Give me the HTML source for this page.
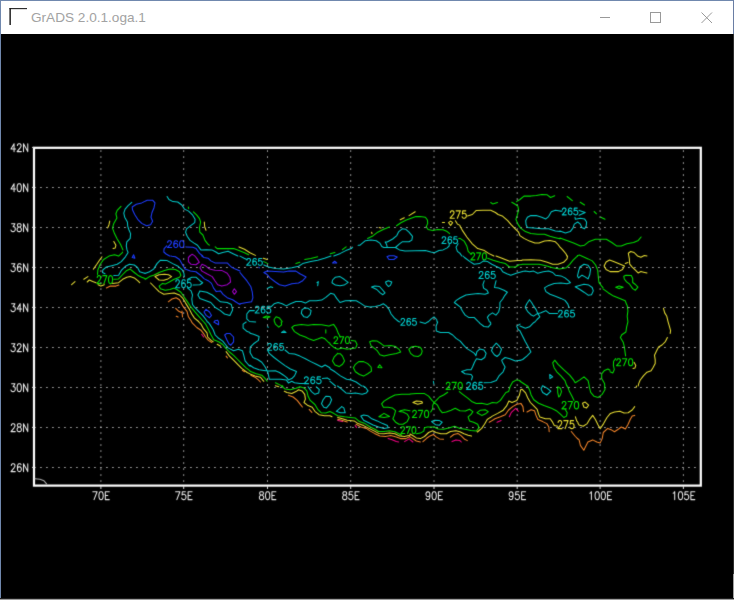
<!DOCTYPE html>
<html><head><meta charset="utf-8"><title>GrADS 2.0.1.oga.1</title>
<style>
html,body{margin:0;padding:0;background:#000;}
body{width:734px;height:600px;overflow:hidden;position:relative;font-family:"Liberation Sans",sans-serif;}
#win{position:absolute;left:0;top:0;width:734px;height:600px;background:#000;}
#tb{position:absolute;left:1px;top:1px;width:732px;height:33px;background:#fff;}
#topline{position:absolute;left:0;top:0;width:734px;height:1px;background:#7088ae;}
#lb{position:absolute;left:0;top:0;width:1px;height:600px;background:#7088ae;}
#rb{position:absolute;left:733px;top:34px;width:1px;height:540px;background:#2d2d2d;}
#rb2{position:absolute;left:733px;top:574px;width:1px;height:26px;background:#a0a0a0;}
#rb3{position:absolute;left:733px;top:0;width:1px;height:34px;background:#6a7ea4;}
#bb{position:absolute;left:0;top:598px;width:734px;height:2px;background:linear-gradient(#000 0,#3a3a3a 50%,#9c9c9c 50%,#9c9c9c 100%);}
#title{position:absolute;left:31px;top:9px;font-size:13.6px;line-height:18px;color:#a2a2a2;letter-spacing:0px;white-space:nowrap;}
svg{position:absolute;left:0;top:0;}
.gr{stroke:#d2d2d2;stroke-width:1;stroke-dasharray:1.3 4.7;fill:none;}
.ct{fill:none;stroke-width:1.05;stroke-linejoin:round;stroke-linecap:round;}
.cl{fill:none;stroke-width:1.1;stroke-linejoin:round;stroke-linecap:round;}
.ax{fill:none;stroke:#e8e8e8;stroke-width:1.05;stroke-linejoin:round;stroke-linecap:round;}
</style></head><body>
<div id="win">
<div id="tb"></div><div id="topline"></div><div id="lb"></div><div id="rb"></div><div id="rb2"></div><div id="rb3"></div><div id="bb"></div>
<div id="title">GrADS 2.0.1.oga.1</div>
<svg width="734" height="600" viewBox="0 0 734 600">
<!-- window chrome icons -->
<rect x="9.4" y="8.1" width="1.5" height="16.9" fill="#222"/><rect x="9.4" y="8.1" width="17.6" height="1.05" fill="#181818"/>
<path d="M600 17.5 H610" stroke="#999" stroke-width="1"/>
<rect x="650.5" y="12.5" width="10" height="10" fill="none" stroke="#999" stroke-width="1"/>
<path d="M701.5 12.5 L712 23 M712 12.5 L701.5 23" stroke="#999" stroke-width="1" fill="none"/>
<defs><filter id="bl" x="-2%" y="-2%" width="104%" height="104%"><feConvolveMatrix order="3" kernelMatrix="0.017 0.085 0.017 0.085 0.592 0.085 0.017 0.085 0.017" divisor="1" edgeMode="none" preserveAlpha="false"/></filter></defs>
<g filter="url(#bl)">
<line x1="100.90" y1="150.4" x2="100.90" y2="484" class="gr"/>
<line x1="183.70" y1="150.4" x2="183.70" y2="484" class="gr"/>
<line x1="267.50" y1="150.4" x2="267.50" y2="484" class="gr"/>
<line x1="350.70" y1="150.4" x2="350.70" y2="484" class="gr"/>
<line x1="434.00" y1="150.4" x2="434.00" y2="484" class="gr"/>
<line x1="517.20" y1="150.4" x2="517.20" y2="484" class="gr"/>
<line x1="600.10" y1="150.4" x2="600.10" y2="484" class="gr"/>
<line x1="683.40" y1="150.4" x2="683.40" y2="484" class="gr"/>
<line x1="34.3" y1="187.50" x2="700" y2="187.50" class="gr"/>
<line x1="34.3" y1="227.50" x2="700" y2="227.50" class="gr"/>
<line x1="34.3" y1="267.50" x2="700" y2="267.50" class="gr"/>
<line x1="34.3" y1="307.50" x2="700" y2="307.50" class="gr"/>
<line x1="34.3" y1="347.50" x2="700" y2="347.50" class="gr"/>
<line x1="34.3" y1="387.50" x2="700" y2="387.50" class="gr"/>
<line x1="34.3" y1="427.50" x2="700" y2="427.50" class="gr"/>
<line x1="34.3" y1="467.50" x2="700" y2="467.50" class="gr"/>
<path d="M132.2 207.0 136.3 204.3 141.7 202.9 147.2 200.2 152.6 200.2 155.0 202.9 154.0 207.7 152.0 212.5 151.0 217.2 152.6 221.3 150.6 224.7 146.5 225.7 141.7 223.4 137.7 219.3 134.7 214.5 132.5 209.8 132.2 207.0 M133.6 254.8 132.2 257.5 134.9 258.2 133.6 254.8 M185.9 246.9 192.7 247.2 196.1 248.6 199.5 253.4 202.7 256.0 M166.8 245.9 164.1 248.6 163.8 252.0 166.1 254.0 169.6 256.0 M389.0 256.0 389.3 255.8 394.1 255.8 394.5 256.0 M170.7 256.0 172.0 256.3 175.4 256.8 179.5 259.5 182.2 264.3 185.0 269.1 190.4 271.1 195.9 271.8 200.6 275.2 204.0 278.6 208.1 280.7 211.5 283.4 213.6 288.1 216.3 291.6 220.4 290.9 223.1 294.3 227.2 297.7 232.6 299.7 236.7 302.5 240.0 304.5 M201.8 256.0 204.0 257.5 208.1 258.2 210.8 260.9 214.9 262.9 221.7 262.9 227.2 262.9 231.3 267.0 235.4 269.1 240.0 271.1 M206.1 309.3 204.0 312.0 206.1 315.4 209.5 317.7 211.5 315.4 209.5 312.0 206.1 309.3 M214.9 320.8 214.4 322.0 M218.6 322.0 217.7 320.2 214.9 320.8 M332.6 262.9 334.7 261.2 336.7 262.9 332.6 262.9 M258.8 267.2 259.5 267.8 M263.8 272.5 267.2 271.1 275.4 271.5 283.6 272.1 289.0 271.1 295.9 271.1 299.9 273.8 306.1 277.0 302.7 280.7 298.6 283.0 291.8 283.8 285.0 286.1 279.5 284.7 275.4 282.0 270.0 277.9 267.2 274.5 263.8 272.5 M240.0 272.5 242.7 275.9 246.8 280.7 250.9 286.8 252.3 292.2 252.9 297.7 251.6 301.8 246.8 302.5 240.0 303.8 M387.0 256.8 388.5 256.0 M394.5 256.0 397.2 257.1 393.8 259.5 389.0 259.5 387.0 256.8 M213.8 322.0 214.0 322.0 M218.6 322.0 218.6 324.8 213.8 322.0 M224.7 335.0 226.8 333.4 230.2 333.6 233.6 337.0 233.6 341.8 230.8 345.2 228.8 343.8 226.8 339.8 224.7 335.0" stroke="#1e3cff" class="ct"/>
<path d="M131.8 202.3 128.1 205.7 125.1 209.1 123.8 213.2 124.7 217.2 127.4 222.0 127.7 226.1 128.8 229.5 130.6 233.6 130.2 238.4 126.8 241.8 126.3 245.9 127.0 249.9 127.9 252.0 M128.1 252.5 125.4 256.8 121.3 261.6 117.2 264.3 111.8 265.7 106.3 267.0 102.9 269.8 102.5 272.5 105.0 273.8 M113.8 275.6 118.6 275.2 121.3 270.4 125.4 266.3 129.5 264.3 134.3 265.0 137.7 267.7 139.7 271.8 144.5 273.2 145.0 273.0 M167.1 196.5 168.9 199.5 172.9 201.6 177.7 202.0 181.8 205.0 184.5 209.1 188.6 211.1 192.7 215.2 195.1 219.3 194.7 222.7 190.7 225.7 186.6 228.8 185.6 232.2 187.2 236.3 190.0 240.4 194.1 243.1 197.5 245.2 200.9 249.9 206.3 249.7 211.8 249.9 215.9 252.0 218.6 253.8 222.7 252.4 228.1 251.3 233.6 254.0 237.9 256.0 M333.8 256.0 340.4 253.4 345.8 250.6 351.3 248.6 352.6 247.2 M358.1 245.2 360.0 245.2 M360.0 245.2 365.4 240.7 370.9 240.1 376.3 240.7 379.8 243.1 381.8 246.5 383.8 247.5 395.4 247.5 399.5 249.9 405.0 250.9 425.4 250.6 430.8 252.0 434.3 252.7 439.0 250.6 443.1 249.9 447.2 247.9 449.2 245.9 449.2 243.8 M387.2 247.2 386.6 244.5 385.2 242.0 387.2 242.0 392.7 239.0 396.8 235.6 398.8 231.6 402.2 228.8 405.6 229.2 409.0 232.2 412.5 236.3 411.8 240.1 409.0 241.8 402.2 241.8 399.5 243.8 395.4 247.5 M458.1 243.8 456.0 247.2 457.4 251.3 460.0 253.4 M560.0 211.1 555.4 210.2 551.3 211.8 548.6 216.6 545.8 218.9 541.7 217.2 536.3 215.6 530.8 215.6 527.4 217.2 525.7 220.7 526.1 224.7 527.4 227.5 533.6 227.9 541.7 228.8 548.6 228.8 555.4 230.9 560.0 231.6 M460.0 253.4 461.8 256.0 M560.0 211.1 562.0 211.1 M579.1 210.4 585.2 212.5 579.1 215.2 M575.0 217.2 575.3 219.3 580.4 218.3 584.5 218.9 586.6 222.0 586.2 226.1 584.5 228.8 581.8 227.5 580.4 224.1 577.7 222.0 574.3 224.1 572.9 228.1 570.2 231.6 565.4 232.9 560.0 230.9 M145.0 273.5 149.5 271.8 153.6 269.1 157.0 263.6 160.4 260.2 167.2 260.6 172.7 263.6 178.1 266.3 182.2 269.8 183.9 273.2 184.3 276.6 M187.7 279.3 191.8 277.2 195.9 277.2 199.9 280.7 202.7 282.7 199.9 284.7 193.1 285.1 M187.7 288.1 191.1 290.9 192.5 295.0 191.8 299.0 192.5 304.5 194.5 307.2 198.6 311.3 202.7 315.4 206.8 320.8 207.3 322.0 M199.9 290.9 197.9 295.0 199.9 298.4 205.4 300.4 210.8 302.5 214.9 307.2 220.4 310.6 224.5 314.0 229.9 315.4 232.6 309.9 231.3 304.5 227.2 302.5 220.4 301.8 216.3 298.4 212.2 295.0 206.8 292.2 199.9 290.9 M263.8 265.0 268.6 267.0 275.4 268.4 283.6 269.1 291.8 267.7 298.6 266.3 302.7 263.6 310.8 261.6 317.7 260.2 324.5 258.2 331.0 256.0 M240.0 256.1 244.1 258.2 246.8 259.5 M267.2 288.4 270.7 286.8 272.7 287.5 M317.0 282.7 318.3 281.6 317.7 285.7 M340.0 276.6 335.4 277.2 332.6 280.0 332.0 282.7 335.4 285.1 340.0 285.7 M270.7 307.2 274.1 303.8 278.1 302.5 282.2 303.8 286.3 305.9 290.4 303.8 295.9 301.5 301.3 301.5 305.4 303.1 309.5 300.7 316.3 300.7 321.7 300.1 325.8 297.4 330.6 293.3 334.0 294.3 336.7 298.4 340.0 302.5 M254.3 310.6 249.5 310.6 246.8 314.0 246.8 318.8 249.5 321.5 255.7 322.0 M302.0 309.9 304.7 307.9 308.1 308.3 311.1 310.6 310.2 314.7 307.4 317.4 304.0 316.8 301.3 313.4 302.0 309.9 M340.0 276.6 344.1 279.3 348.2 282.4 344.1 285.1 340.0 285.7 M385.6 282.0 388.4 280.7 391.8 282.0 390.4 285.4 388.4 286.5 386.3 284.1 385.6 282.0 M371.6 287.1 374.7 286.1 379.5 286.5 382.2 289.5 385.0 292.9 382.9 294.7 380.2 292.9 376.8 289.5 371.6 287.1 M340.0 302.5 345.4 300.7 350.9 300.4 356.3 300.7 360.4 303.1 364.5 305.9 370.0 306.9 375.4 306.5 380.2 305.2 383.3 303.8 386.3 305.9 389.0 309.3 391.1 314.0 394.5 318.1 398.6 321.5 400.0 322.0 M427.8 322.0 428.6 321.5 431.3 318.8 434.0 316.8 436.7 319.5 437.1 322.0 M463.0 256.0 464.5 257.5 470.0 261.6 474.1 264.3 479.5 263.6 483.6 260.9 487.7 261.6 491.8 264.3 495.9 266.3 500.6 268.4 502.7 271.8 506.8 273.8 510.8 275.2 516.3 273.2 521.7 271.8 522.0 271.8 M484.3 280.7 482.9 284.7 483.6 288.1 487.0 290.2 488.4 292.9 485.0 294.3 478.1 293.6 471.3 294.3 465.9 295.0 460.4 297.7 456.3 300.4 454.3 302.5 457.0 304.5 460.4 307.2 462.5 311.3 465.2 315.1 468.6 317.4 474.1 317.4 476.8 320.2 478.6 322.0 M489.4 322.0 489.0 320.8 487.4 317.4 489.0 315.1 492.5 312.9 495.9 315.1 498.6 312.0 499.9 307.2 499.9 302.5 502.7 299.0 504.7 295.6 507.4 292.2 504.0 290.2 498.6 288.1 494.5 287.5 495.2 284.1 496.1 280.7 M522.0 271.5 525.4 271.1 529.5 271.8 533.6 271.1 537.7 273.2 543.2 271.8 548.6 271.1 552.7 272.5 555.4 275.2 560.9 275.9 565.0 277.9 568.4 280.7 570.4 282.7 567.0 283.8 560.9 283.0 554.1 283.4 548.6 285.4 544.5 287.9 545.9 291.6 550.0 294.3 555.4 296.3 560.9 298.4 565.0 300.4 567.7 303.8 569.0 307.2 M557.5 313.4 549.3 313.4 545.9 310.6 544.5 311.3 540.4 312.9 537.7 313.4 M529.5 299.7 526.8 303.8 525.2 307.2 527.5 311.3 530.9 314.7 533.6 316.1 537.7 313.4 536.3 309.9 533.6 305.9 531.6 302.5 529.5 299.7 M537.7 313.4 539.8 316.8 537.0 319.5 534.9 322.0 M579.9 267.0 584.0 264.3 588.1 265.3 590.6 269.1 589.8 274.5 588.1 278.9 584.7 276.6 582.0 275.2 578.6 277.9 577.5 275.9 578.6 271.1 579.9 267.0 M575.2 286.8 578.6 285.7 584.0 284.3 588.8 285.1 592.2 287.5 593.3 290.9 591.5 294.7 588.1 295.2 584.0 292.2 579.9 289.5 575.2 286.8 M208.0 322.0 209.7 324.1 213.1 329.5 215.2 335.0 217.9 337.7 222.7 341.1 225.4 344.5 228.1 347.9 233.6 350.7 238.3 349.3 242.4 350.7 243.8 355.4 245.1 360.9 248.6 365.0 250.0 366.2 M246.2 322.0 243.1 324.1 243.1 328.2 247.2 331.6 250.0 332.4 M250.0 351.4 249.9 352.0 250.0 352.2 M250.0 333.2 253.6 334.3 259.1 336.6 258.4 340.4 253.6 343.8 250.2 347.2 250.2 352.7 252.9 357.5 257.7 359.5 261.8 362.2 265.2 367.0 267.9 372.5 268.9 377.2 269.3 379.3 275.4 379.3 280.9 379.3 286.3 379.9 288.4 382.9 291.8 381.3 294.5 382.7 299.9 383.4 304.0 383.4 M250.0 365.3 253.6 367.7 259.1 369.7 263.8 370.4 268.6 371.1 275.4 370.7 279.5 372.5 283.6 375.2 287.0 377.9 288.4 379.9 M285.0 350.0 289.0 353.4 294.5 354.1 299.9 356.1 305.4 358.8 310.8 361.6 316.3 364.3 321.7 367.0 325.1 365.0 329.9 367.7 330.0 367.7 M267.9 350.7 269.3 353.4 274.1 357.5 279.5 361.6 285.0 365.6 290.4 369.0 296.5 371.5 294.5 375.9 291.8 378.6 288.4 379.9 M322.4 378.6 327.2 377.9 330.0 379.8 M281.6 332.5 283.9 330.9 286.0 332.5 281.6 332.5 M267.7 326.5 268.2 327.4 M330.0 368.7 335.0 371.8 340.4 375.9 346.6 379.3 351.3 379.9 356.1 382.0 360.9 385.4 361.9 386.0 M335.5 386.0 331.6 382.7 330.0 381.4 M420.0 322.0 425.4 323.4 427.6 322.0 M437.7 322.0 437.7 322.0 436.1 326.1 436.3 330.9 440.4 332.5 448.6 332.5 452.7 335.0 456.1 338.4 460.2 341.1 463.6 345.2 467.0 348.6 471.1 351.1 474.5 353.4 475.9 355.7 476.9 351.6 479.9 348.9 484.0 350.0 486.1 353.4 484.7 357.5 481.3 359.8 476.5 358.8 474.5 362.2 472.5 367.0 471.1 369.7 467.0 369.7 461.6 371.5 465.0 373.8 471.1 374.5 472.5 376.5 471.5 379.9 M484.0 382.7 490.8 382.4 496.3 380.6 499.0 375.9 503.1 371.8 505.1 367.0 502.4 362.2 501.7 360.2 505.1 357.5 509.9 358.8 515.4 360.9 520.0 360.2 M478.8 322.0 479.9 323.4 484.0 326.5 488.1 327.1 490.8 324.1 490.5 322.0 M496.3 343.2 492.9 347.0 491.5 350.7 494.3 354.7 497.0 356.5 499.7 354.1 501.5 349.3 499.0 345.9 496.3 343.2 M520.0 324.1 516.7 326.1 518.1 329.5 520.0 330.9 M433.4 381.3 433.9 384.0 M534.7 322.0 533.6 322.7 529.5 326.8 525.4 328.2 520.0 326.1 M520.0 330.9 522.0 335.0 525.4 341.8 528.9 347.9 530.9 352.0 526.8 356.1 522.7 359.5 520.0 360.6 M549.7 374.5 552.7 376.9 550.0 378.6 549.7 374.5 M542.5 385.7 542.3 386.0 M543.1 386.0 542.5 385.7 M325.8 396.3 323.1 399.8 321.5 403.8 323.8 407.2 326.5 407.9 329.9 403.8 331.6 399.8 329.9 396.6 325.8 396.3 M308.1 386.8 311.5 391.6 314.9 394.3 318.7 392.9 319.3 389.5 316.3 386.8 M337.5 386.0 340.4 388.2 345.9 392.9 351.3 393.6 355.4 392.9 362.2 394.3 366.3 392.9 368.0 390.9 365.6 387.5 363.0 386.0 M341.8 406.6 336.3 411.3 340.4 412.7 345.2 412.7 343.8 407.9 341.8 406.6 M360.9 416.1 363.6 415.1 367.7 415.7 371.8 418.8 377.2 420.9 382.7 423.6 387.4 425.6 388.1 427.7 384.0 428.4 378.6 427.0 373.1 425.0 367.7 422.2 363.6 420.2 360.9 416.1 M431.6 421.6 434.7 420.2 439.5 420.6 442.2 422.2 439.5 425.2 435.4 424.7 431.6 421.6 M542.5 386.0 541.0 388.9 542.7 392.5 546.8 395.0 550.8 391.2 547.4 388.4 543.2 386.0" stroke="#00c8c8" class="ct"/>
<path d="M121.0 206.3 117.2 210.4 115.9 213.8 116.9 217.9 113.8 223.4 112.5 228.1 114.5 233.6 117.2 239.0 120.6 244.5 122.9 249.9 M122.5 252.0 122.4 252.7 118.6 256.1 114.5 254.8 109.0 256.1 103.6 259.5 100.2 264.3 97.9 269.8 97.5 274.5 M113.8 279.3 118.6 278.9 122.7 274.5 126.8 270.4 130.2 269.1 134.3 272.5 137.7 275.2 141.7 277.2 145.0 278.6 M188.3 207.0 188.6 208.4 M193.4 211.8 196.8 215.2 199.5 218.6 200.6 222.0 199.5 227.5 199.8 232.2 202.9 235.0 205.0 240.4 207.7 243.8 209.3 245.2 M215.2 246.9 217.2 248.6 225.4 248.6 233.6 248.6 239.0 250.6 244.5 252.7 248.6 254.7 M330.2 253.8 334.9 252.4 M342.4 249.7 346.1 246.9 M458.8 238.4 460.0 238.4 M367.5 238.4 372.3 236.3 377.7 232.2 383.2 229.5 389.3 227.1 M396.5 225.7 400.9 222.7 406.3 220.0 411.8 217.9 415.9 216.6 419.9 216.6 425.4 217.2 427.4 220.0 427.7 223.4 426.3 226.8 428.1 229.5 432.9 230.6 437.7 229.5 443.1 229.8 447.2 231.6 449.6 233.6 M516.5 201.6 519.9 199.5 524.0 196.1 530.8 196.1 536.3 195.4 541.7 194.4 547.2 194.8 550.6 197.5 554.7 195.7 M490.7 202.5 492.7 203.9 497.5 202.5 M511.8 202.3 515.2 204.3 517.2 205.7 M517.9 206.3 518.6 210.4 517.2 215.2 515.9 219.3 517.9 224.1 520.6 228.1 525.4 231.6 530.8 233.6 537.7 234.3 544.5 234.3 549.9 236.3 555.4 237.7 560.0 238.8 M460.0 238.4 464.1 241.1 466.8 245.9 468.2 251.3 470.9 254.0 M567.1 196.5 572.3 200.6 M580.2 202.3 584.5 205.0 M594.1 211.5 596.5 213.8 M600.9 217.2 605.0 219.3 M560.0 238.0 566.8 240.4 573.6 243.1 580.4 245.9 584.5 245.2 588.6 241.8 595.4 239.3 600.9 239.3 606.3 239.3 611.8 242.5 616.5 245.9 621.3 245.9 626.8 243.8 633.6 242.5 638.3 240.4 641.1 237.0 M577.2 256.0 577.7 255.4 579.8 255.1 581.6 256.0 M623.8 276.3 625.9 275.2 631.3 275.6 632.7 278.4 632.7 282.5 635.4 284.5 637.9 287.2 635.4 290.2 632.7 288.6 629.3 283.8 626.6 281.8 624.3 279.0 623.8 276.3 M615.7 287.2 619.1 286.1 623.2 287.2 619.1 288.6 615.7 287.2 M603.0 288.8 608.2 292.7 613.6 296.1 620.4 298.8 625.2 300.8 626.8 305.0 M145.0 279.1 145.4 279.3 149.5 276.6 153.6 275.2 159.1 272.5 164.5 270.4 170.0 269.1 175.4 269.5 179.5 271.8 180.9 275.2 179.5 277.2 174.1 279.3 169.3 282.0 165.2 284.1 162.5 283.4 159.1 286.1 160.4 288.8 165.2 290.2 170.0 289.5 174.1 288.1 176.8 289.5 180.9 292.2 183.6 296.3 187.0 301.1 191.1 307.2 194.5 311.3 198.6 316.1 203.8 322.0 M263.8 261.6 267.9 263.6 M295.9 263.6 299.9 262.3 M304.7 259.5 310.8 258.4 317.7 256.8 M263.2 317.4 266.6 316.1 270.0 316.8 267.2 318.1 263.2 317.4 M276.1 316.8 274.1 319.5 274.4 322.0 M282.1 322.0 282.2 321.5 279.5 318.1 276.1 316.8 M487.7 258.2 493.1 260.2 499.9 262.3 505.4 263.6 509.5 267.0 515.6 267.0 519.0 264.7 522.0 264.6 M522.0 264.3 530.9 264.3 539.1 264.3 545.9 265.7 552.7 267.7 559.5 269.1 566.3 267.7 569.7 264.3 573.1 260.2 576.5 256.8 577.6 256.0 M581.6 256.0 582.7 256.5 588.1 258.9 592.2 260.9 595.6 265.0 597.7 270.4 598.3 277.2 599.0 282.7 601.7 286.1 603.0 287.6 M203.9 322.0 205.6 324.1 208.4 329.5 211.1 335.0 213.8 339.8 218.6 341.8 222.7 344.5 225.4 347.9 229.5 352.0 233.6 355.4 237.7 359.5 241.7 363.6 245.8 367.7 250.0 370.8 M274.7 322.0 275.4 324.1 278.8 327.1 281.6 324.8 281.2 322.0 M330.0 325.7 328.6 326.1 321.7 324.8 313.6 324.4 308.1 325.2 301.3 324.4 294.5 325.4 291.8 327.5 294.5 331.6 299.9 335.0 305.4 337.0 309.5 339.1 313.6 340.4 317.7 339.1 321.7 337.4 324.5 338.4 328.6 342.5 330.0 343.2 M325.8 329.8 325.8 332.9 M250.0 371.3 256.3 373.8 261.8 375.2 265.2 378.6 267.2 381.3 M275.4 382.7 280.9 385.4 282.9 386.0 M330.0 325.5 333.6 324.4 336.3 328.2 338.4 333.6 340.4 337.0 M351.3 340.4 355.4 341.1 357.1 344.5 355.7 347.9 351.3 348.6 347.2 349.3 341.8 347.9 337.7 349.3 333.6 347.2 330.0 344.2 M337.7 353.4 334.3 356.8 332.5 360.9 335.0 365.0 339.1 366.6 342.5 364.3 344.5 360.9 342.5 356.1 340.4 353.8 337.7 353.4 M358.8 361.6 355.4 364.3 353.4 367.7 355.4 371.8 359.5 374.5 363.6 376.1 367.7 373.8 371.5 371.1 371.1 367.0 367.7 363.6 363.6 361.6 358.8 361.6 M369.7 341.8 372.5 340.7 377.2 341.1 381.3 343.8 384.0 345.9 390.8 345.6 395.6 346.6 399.0 349.3 400.7 352.0 396.3 353.4 389.5 354.7 384.0 356.1 379.9 354.7 377.2 350.7 373.8 347.9 371.1 345.9 369.7 341.8 M377.9 367.4 379.7 364.7 382.0 367.7 377.9 367.4 M420.0 347.2 415.4 346.2 411.3 347.0 408.8 349.3 410.6 353.4 414.0 356.1 418.1 356.5 420.0 355.4 M420.0 347.2 421.4 348.9 422.2 351.1 421.4 353.8 420.0 355.4 M510.4 386.0 512.6 382.0 516.7 379.9 520.0 380.6 M566.8 386.0 565.0 380.6 560.9 375.9 556.8 371.8 554.1 367.7 552.7 362.9 554.7 360.2 558.1 364.3 563.6 369.7 569.7 375.2 573.1 379.3 575.2 382.7 579.9 379.9 584.0 376.9 588.1 380.6 589.3 386.0 M604.8 386.0 604.5 383.4 601.7 378.6 601.7 373.8 604.5 370.4 607.9 369.0 610.0 370.3 M520.0 381.3 525.4 384.7 527.0 386.0 M627.0 305.0 627.2 305.4 627.9 310.9 627.2 316.3 627.9 321.8 626.6 327.2 625.9 332.0 621.8 334.7 620.4 337.5 623.2 342.2 624.5 347.7 625.2 353.1 625.6 355.9 M615.7 358.6 613.6 361.3 613.4 365.4 614.3 369.5 612.9 372.9 610.0 371.7 M281.5 386.0 285.0 388.9 290.4 389.8 295.9 388.2 299.9 386.8 304.0 387.9 306.8 390.9 308.1 396.3 310.2 400.4 314.9 404.5 317.7 409.3 321.1 412.7 325.8 413.0 329.9 411.6 334.0 413.4 M334.0 413.6 337.7 415.7 344.5 416.8 350.0 417.5 355.4 418.1 359.5 421.6 365.0 423.6 370.4 427.0 374.5 429.0 378.6 431.5 384.0 431.5 389.5 430.7 394.9 431.8 399.0 433.8 401.7 435.2 M410.0 394.3 409.9 394.3 401.7 394.3 394.9 395.0 389.5 397.7 384.0 401.1 381.6 403.8 383.4 407.2 388.1 407.2 392.2 407.9 395.6 410.7 394.3 415.4 392.9 418.8 395.6 422.2 399.0 424.3 403.1 424.3 407.2 421.6 409.2 417.5 407.2 414.1 403.1 412.0 399.0 411.6 400.4 410.7 404.5 409.7 409.9 410.7 410.0 410.7 M378.9 416.8 384.0 413.4 389.5 416.5 384.0 417.5 378.9 416.8 M410.0 394.1 416.3 393.4 424.5 393.6 428.6 396.1 432.0 400.4 434.1 402.5 436.8 399.8 439.5 397.0 443.6 395.0 447.7 392.3 M459.3 391.6 462.7 394.3 468.1 398.4 472.2 401.8 476.3 403.4 481.7 403.2 487.2 404.5 490.0 403.5 M434.1 402.5 432.7 405.2 432.7 408.6 430.7 412.0 M434.1 402.5 437.5 405.2 439.5 409.3 442.2 412.7 446.3 412.0 451.1 410.2 455.2 408.3 459.9 410.7 465.4 411.1 469.5 409.3 472.9 411.6 470.8 414.7 468.1 416.8 469.5 420.9 473.6 422.2 477.7 424.3 479.0 427.7 476.3 431.1 470.8 430.4 465.4 429.3 459.9 428.4 454.5 426.3 449.7 427.7 443.6 429.3 438.1 429.0 434.1 427.0 427.2 427.0 424.5 427.7 423.8 431.1 420.4 433.1 416.3 433.8 M477.0 412.7 480.4 410.2 485.1 409.7 488.3 411.6 485.1 414.1 481.7 415.4 477.0 412.7 M490.0 403.5 492.3 402.5 497.0 402.9 500.4 400.4 503.2 396.3 505.9 392.5 508.6 391.6 510.0 386.8 510.4 386.0 M527.4 386.0 527.7 386.1 529.7 390.2 531.1 395.0 533.8 399.8 538.6 403.2 544.0 405.6 550.8 407.9 556.3 410.7 560.4 414.1 563.8 417.5 566.5 416.1 567.2 412.7 565.1 409.3 M567.4 386.0 569.2 390.9 572.0 396.3 574.0 400.4 M557.7 386.8 560.4 388.2 561.5 391.6 560.1 395.7 558.7 397.0 557.7 392.3 557.7 386.8 M589.0 386.0 589.3 386.8 590.7 392.3 594.1 396.3 598.1 397.4 602.2 394.3 605.0 389.5 604.6 386.0" stroke="#00dc00" class="ct"/>
<path d="M109.7 221.1 109.0 224.7 107.7 227.9 M113.8 241.5 115.9 245.2 115.2 247.9 113.1 248.6 M102.0 256.8 99.5 260.2 96.8 264.3 93.4 269.1 M71.6 284.7 75.0 281.6 M83.8 279.3 87.9 276.6 M87.2 282.0 89.3 280.0 92.7 281.6 96.1 282.7 M98.1 284.7 100.9 286.1 104.3 284.7 M112.5 283.4 118.6 282.7 122.7 279.3 126.8 277.2 130.2 276.6 134.3 277.9 137.7 280.7 139.7 282.7 M204.3 222.0 204.7 226.8 206.0 230.2 M239.0 246.9 244.5 249.3 249.9 252.7 255.4 255.4 M400.2 219.7 404.3 217.7 M409.0 215.6 415.2 211.8 M379.1 227.5 381.1 227.9 M371.6 232.2 372.0 233.6 M442.4 222.4 444.5 222.4 M448.6 222.7 450.6 221.1 452.6 222.7 450.6 225.4 448.6 222.7 M455.4 220.7 457.4 224.1 460.0 225.4 M467.5 215.9 472.3 214.5 476.3 210.4 483.2 210.2 490.7 210.2 495.4 212.5 498.1 214.5 502.2 215.9 507.7 220.7 511.1 224.7 515.2 228.8 518.6 232.2 519.9 235.6 524.0 238.4 529.5 241.1 534.9 242.9 539.0 243.1 544.5 241.1 549.9 240.4 555.4 241.8 558.1 244.5 560.0 247.2 M460.0 226.1 462.7 230.9 466.8 237.0 472.3 243.8 477.7 248.6 484.5 250.6 488.6 253.4 493.9 256.0 M560.0 247.2 562.7 249.9 566.1 254.0 566.9 256.0 M606.1 262.0 609.5 260.0 613.6 261.6 619.1 263.8 624.5 266.1 622.5 269.5 618.4 271.6 610.2 271.6 606.1 269.5 604.1 266.1 606.1 262.0 M625.2 263.4 627.9 262.4 M647.0 255.9 644.3 255.6 640.9 257.2 637.5 255.9 634.1 252.5 630.7 251.5 628.3 253.2 629.3 258.6 629.7 264.1 632.0 266.8 635.4 270.2 638.1 272.9 640.9 271.6 643.6 272.2 647.0 272.9 M155.0 276.6 159.1 274.8 164.5 274.3 168.6 274.8 171.6 276.6 167.9 278.9 163.8 280.2 159.1 280.0 155.0 276.6 M150.6 283.0 155.0 287.5 159.1 291.6 163.8 294.3 169.3 293.6 174.1 292.9 179.5 295.0 182.9 298.4 185.6 303.1 189.0 308.6 191.8 314.0 194.5 318.1 198.6 321.5 199.0 322.0 M263.2 258.2 267.2 259.5 M496.0 256.0 501.3 257.9 509.5 261.2 517.7 260.6 522.0 260.4 M522.0 260.1 530.9 259.8 540.4 260.2 547.2 262.3 552.7 264.3 558.1 264.3 563.6 262.3 567.0 258.9 567.6 256.0 M198.8 322.0 200.9 324.1 203.6 328.9 207.0 332.9 207.7 337.0 211.1 340.4 213.1 341.8 M217.2 344.3 220.6 346.2 M226.1 351.6 229.5 356.1 233.6 360.2 237.7 364.3 241.7 368.4 247.2 372.5 250.0 373.9 M250.0 374.0 255.0 375.9 260.4 377.2 263.8 381.3 M275.4 385.7 276.3 386.0 M663.4 308.2 664.7 312.9 666.8 316.3 668.1 321.8 669.5 326.6 670.6 330.7 670.2 333.4 M667.4 337.5 665.4 341.6 662.0 345.0 658.6 347.0 656.5 351.1 654.5 355.2 655.2 359.9 655.2 363.4 653.1 367.4 651.1 370.8 647.0 372.2 643.6 375.6 640.2 380.0 638.8 383.4 638.2 386.0 M634.2 362.5 635.8 365.4 634.9 368.1 633.0 368.4 M284.3 391.2 287.0 392.5 291.8 393.4 295.9 391.6 298.6 389.8 302.0 390.9 304.7 394.3 305.4 399.1 304.0 402.5 307.4 405.2 312.2 407.2 314.9 411.3 319.0 414.7 324.5 415.7 329.9 415.7 332.0 416.8 M276.3 386.0 278.8 386.8 M337.7 417.5 342.5 418.8 347.2 420.2 354.1 420.9 358.1 423.6 363.6 425.6 369.0 428.4 374.5 431.1 378.6 433.4 384.0 433.8 389.5 432.9 394.9 433.8 399.7 436.1 404.5 436.5 408.6 435.6 410.0 435.2 M412.9 402.5 416.3 401.1 421.8 401.5 422.5 402.9 417.7 404.3 412.9 402.5 M477.4 432.0 481.7 428.4 484.5 424.3 487.2 419.5 490.0 417.6 M410.0 434.0 412.3 435.2 416.3 437.9 420.4 438.6 424.5 436.5 428.6 432.5 432.7 430.7 436.1 432.5 440.9 433.8 446.3 433.8 450.4 431.5 455.9 430.7 459.9 431.8 464.0 433.8 468.1 435.2 471.5 436.1 M490.0 417.8 492.3 416.1 497.7 413.4 503.2 410.2 506.6 405.9 508.9 401.1 512.0 402.5 516.8 400.4 519.5 395.0 520.6 389.8 522.2 389.3 525.6 392.9 527.7 397.7 530.4 402.5 533.8 405.9 537.2 409.3 538.6 414.1 539.9 417.1 545.4 418.8 550.2 418.8 552.2 421.6 554.3 425.6 557.7 426.3 M575.4 416.8 576.7 420.9 578.0 422.5 M582.5 403.2 585.2 402.1 588.6 405.2 586.6 407.9 583.8 407.0 582.5 403.2 M578.0 423.3 579.1 425.0 583.2 426.3 587.2 423.6 590.0 418.8 592.7 415.4 595.4 419.5 598.1 425.0 600.2 428.8 603.6 423.6 607.0 417.5 610.4 413.4 614.5 412.0 619.9 411.3 624.0 413.0 628.1 412.7 632.2 410.0 634.7 406.6 M636.0 387.5 636.6 386.0" stroke="#e6dc32" class="ct"/>
<path d="M106.3 287.9 110.4 286.1 115.9 286.1 118.9 285.1 M168.3 301.8 172.0 299.0 176.1 297.7 179.5 299.7 181.6 303.8 183.6 307.2 187.0 311.3 188.4 316.8 191.1 320.8 191.7 322.0 M175.7 308.3 178.8 311.3 181.3 312.4 M182.0 311.0 182.5 317.0 M176.2 316.2 178.1 317.0 M191.6 322.0 192.7 323.4 196.8 327.5 200.9 330.2 203.6 333.6 205.6 337.0 208.4 340.4 211.8 342.5 M226.1 356.1 227.4 357.9 M242.4 370.4 244.5 371.8 M250.9 375.2 255.0 377.2 258.4 379.9 260.4 382.0 M288.4 395.3 293.1 397.0 297.2 400.4 299.9 403.8 302.4 407.0 M309.2 409.3 311.9 412.4 M337.7 419.2 341.8 420.2 347.2 422.0 M356.1 424.3 360.9 427.0 366.3 428.4 370.4 431.1 374.5 433.4 379.9 435.9 385.4 436.5 390.8 435.6 396.3 436.9 400.4 438.6 405.8 438.6 409.9 436.5 410.0 436.6 M410.0 436.9 412.3 438.3 416.3 441.0 420.4 442.0 M422.9 441.6 426.6 438.3 430.0 435.9 433.4 434.5 436.1 436.9 439.5 438.9 443.6 439.3 M450.4 437.2 453.8 434.5 457.9 433.4 461.3 435.9 464.7 439.3 467.4 440.6 M489.2 422.2 490.0 421.8 M490.0 421.9 495.0 418.8 500.4 416.8 505.2 414.7 508.6 410.0 512.7 406.6 516.8 404.3 520.9 403.4 522.9 406.6 523.6 411.6 M527.0 412.0 531.1 409.7 534.5 410.7 535.9 415.1 537.9 419.5 542.7 421.6 546.8 423.6 548.8 427.0 549.2 431.8 M571.3 431.5 575.4 436.5 578.0 439.2 M578.0 438.9 579.1 439.9 580.4 445.4 583.8 450.2 585.9 446.1 587.9 442.0 592.7 439.9 596.8 442.0 600.2 442.9 602.2 438.6 603.3 432.5 607.7 428.4 611.8 430.1 614.5 431.8 618.6 429.0 621.3 427.0 625.4 429.0 628.1 424.3 630.2 419.5 632.2 416.1 634.7 415.4" stroke="#f08228" class="ct"/>
<path d="M192.0 254.3 189.7 256.0 M194.7 256.0 194.1 255.4 192.0 254.3 M202.0 264.3 199.9 267.7 202.0 271.1 206.8 273.8 212.2 276.6 214.9 280.7 217.7 284.7 221.7 286.1 227.2 284.7 230.6 282.0 229.9 277.2 227.2 273.2 221.7 270.4 214.9 270.2 209.5 269.1 205.4 265.7 202.0 264.3 M234.3 288.8 232.6 291.6 234.3 294.3 236.5 291.6 234.3 288.8 M190.0 256.0 188.4 257.5 188.4 261.6 191.1 264.3 195.9 264.7 199.3 262.3 197.2 258.9 194.9 256.0" stroke="#a000c8" class="ct"/>
<path d="M201.6 334.3 203.6 337.0 M337.7 420.6 342.5 421.6 M355.1 425.6 356.5 427.4 M388.1 438.6 392.2 439.7 396.3 441.6 398.7 442.0 M404.5 441.6 409.2 438.9 410.0 439.6 M410.0 439.7 412.9 442.0 M452.0 441.6 455.9 439.9 459.9 440.6 461.3 442.0 M509.3 416.8 511.3 412.4 515.7 408.3 518.4 411.3 M497.0 422.2 501.1 420.6" stroke="#f00082" class="ct"/>
<path d="M167.69 242.39 L167.69 242.07 L167.99 241.43 L168.30 241.10 L168.91 240.78 L170.13 240.78 L170.75 241.10 L171.05 241.43 L171.36 242.07 L171.36 242.71 L171.05 243.35 L170.44 244.32 L167.38 247.53 L171.66 247.53 M177.47 241.75 L177.16 241.10 L176.25 240.78 L175.64 240.78 L174.72 241.10 L174.11 242.07 L173.80 243.67 L173.80 245.28 L174.11 246.56 L174.72 247.21 L175.64 247.53 L175.94 247.53 L176.86 247.21 L177.47 246.56 L177.78 245.60 L177.78 245.28 L177.47 244.32 L176.86 243.67 L175.94 243.35 L175.64 243.35 L174.72 243.67 L174.11 244.32 L173.80 245.28 M181.44 240.78 L180.53 241.10 L179.92 242.07 L179.61 243.67 L179.61 244.64 L179.92 246.24 L180.53 247.21 L181.44 247.53 L182.06 247.53 L182.97 247.21 L183.58 246.24 L183.89 244.64 L183.89 243.67 L183.58 242.07 L182.97 241.10 L182.06 240.78 L181.44 240.78" stroke="#1e3cff" class="cl"/>
<path d="M97.26 277.54 L97.26 277.17 L97.55 276.41 L97.84 276.03 L98.42 275.65 L99.57 275.65 L100.15 276.03 L100.44 276.41 L100.73 277.17 L100.73 277.92 L100.44 278.68 L99.86 279.82 L96.98 283.62 L101.02 283.62 M106.80 275.65 L103.91 283.62 M102.75 275.65 L106.80 275.65 M110.26 275.65 L109.40 276.03 L108.82 277.17 L108.53 279.06 L108.53 280.20 L108.82 282.10 L109.40 283.24 L110.26 283.62 L110.84 283.62 L111.71 283.24 L112.28 282.10 L112.57 280.20 L112.57 279.06 L112.28 277.17 L111.71 276.03 L110.84 275.65 L110.26 275.65" stroke="#00dc00" class="cl"/>
<path d="M246.99 260.10 L246.99 259.78 L247.28 259.14 L247.57 258.82 L248.15 258.49 L249.30 258.49 L249.88 258.82 L250.17 259.14 L250.46 259.78 L250.46 260.42 L250.17 261.06 L249.59 262.03 L246.70 265.24 L250.75 265.24 M256.23 259.46 L255.95 258.82 L255.08 258.49 L254.50 258.49 L253.63 258.82 L253.06 259.78 L252.77 261.38 L252.77 262.99 L253.06 264.28 L253.63 264.92 L254.50 265.24 L254.79 265.24 L255.66 264.92 L256.23 264.28 L256.52 263.31 L256.52 262.99 L256.23 262.03 L255.66 261.38 L254.79 261.06 L254.50 261.06 L253.63 261.38 L253.06 262.03 L252.77 262.99 M261.72 258.49 L258.83 258.49 L258.54 261.38 L258.83 261.06 L259.70 260.74 L260.57 260.74 L261.43 261.06 L262.01 261.71 L262.30 262.67 L262.30 263.31 L262.01 264.28 L261.43 264.92 L260.57 265.24 L259.70 265.24 L258.83 264.92 L258.54 264.60 L258.26 263.95" stroke="#00c8c8" class="cl"/>
<path d="M175.90 281.63 L175.90 281.25 L176.19 280.49 L176.48 280.11 L177.06 279.73 L178.21 279.73 L178.79 280.11 L179.08 280.49 L179.37 281.25 L179.37 282.01 L179.08 282.77 L178.50 283.91 L175.61 287.70 L179.66 287.70 M185.14 280.87 L184.86 280.11 L183.99 279.73 L183.41 279.73 L182.54 280.11 L181.97 281.25 L181.68 283.15 L181.68 285.05 L181.97 286.57 L182.54 287.32 L183.41 287.70 L183.70 287.70 L184.57 287.32 L185.14 286.57 L185.43 285.43 L185.43 285.05 L185.14 283.91 L184.57 283.15 L183.70 282.77 L183.41 282.77 L182.54 283.15 L181.97 283.91 L181.68 285.05 M190.63 279.73 L187.74 279.73 L187.46 283.15 L187.74 282.77 L188.61 282.39 L189.48 282.39 L190.34 282.77 L190.92 283.53 L191.21 284.67 L191.21 285.43 L190.92 286.57 L190.34 287.32 L189.48 287.70 L188.61 287.70 L187.74 287.32 L187.46 286.95 L187.17 286.19" stroke="#00c8c8" class="cl"/>
<path d="M450.39 212.60 L450.39 212.25 L450.69 211.55 L450.99 211.20 L451.59 210.84 L452.80 210.84 L453.40 211.20 L453.70 211.55 L454.00 212.25 L454.00 212.95 L453.70 213.65 L453.10 214.70 L450.09 218.20 L454.30 218.20 M460.32 210.84 L457.31 218.20 M456.11 210.84 L460.32 210.84 M465.73 210.84 L462.72 210.84 L462.42 214.00 L462.72 213.65 L463.63 213.30 L464.53 213.30 L465.43 213.65 L466.03 214.35 L466.34 215.40 L466.34 216.10 L466.03 217.15 L465.43 217.85 L464.53 218.20 L463.63 218.20 L462.72 217.85 L462.42 217.50 L462.12 216.80" stroke="#e6dc32" class="cl"/>
<path d="M442.22 238.30 L442.22 237.98 L442.51 237.34 L442.80 237.02 L443.38 236.70 L444.53 236.70 L445.11 237.02 L445.40 237.34 L445.69 237.98 L445.69 238.62 L445.40 239.27 L444.82 240.23 L441.93 243.44 L445.98 243.44 M451.47 237.66 L451.18 237.02 L450.31 236.70 L449.73 236.70 L448.87 237.02 L448.29 237.98 L448.00 239.59 L448.00 241.19 L448.29 242.48 L448.87 243.12 L449.73 243.44 L450.02 243.44 L450.89 243.12 L451.47 242.48 L451.75 241.51 L451.75 241.19 L451.47 240.23 L450.89 239.59 L450.02 239.27 L449.73 239.27 L448.87 239.59 L448.29 240.23 L448.00 241.19 M456.95 236.70 L454.07 236.70 L453.78 239.59 L454.07 239.27 L454.93 238.94 L455.80 238.94 L456.66 239.27 L457.24 239.91 L457.53 240.87 L457.53 241.51 L457.24 242.48 L456.66 243.12 L455.80 243.44 L454.93 243.44 L454.07 243.12 L453.78 242.80 L453.49 242.16" stroke="#00c8c8" class="cl"/>
<path d="M562.52 209.69 L562.52 209.37 L562.81 208.73 L563.10 208.41 L563.68 208.09 L564.83 208.09 L565.41 208.41 L565.70 208.73 L565.99 209.37 L565.99 210.01 L565.70 210.65 L565.12 211.62 L562.23 214.83 L566.28 214.83 M571.77 209.05 L571.48 208.41 L570.61 208.09 L570.03 208.09 L569.17 208.41 L568.59 209.37 L568.30 210.98 L568.30 212.58 L568.59 213.87 L569.17 214.51 L570.03 214.83 L570.32 214.83 L571.19 214.51 L571.77 213.87 L572.05 212.90 L572.05 212.58 L571.77 211.62 L571.19 210.98 L570.32 210.65 L570.03 210.65 L569.17 210.98 L568.59 211.62 L568.30 212.58 M577.25 208.09 L574.37 208.09 L574.08 210.98 L574.37 210.65 L575.23 210.33 L576.10 210.33 L576.96 210.65 L577.54 211.30 L577.83 212.26 L577.83 212.90 L577.54 213.87 L576.96 214.51 L576.10 214.83 L575.23 214.83 L574.37 214.51 L574.08 214.19 L573.79 213.55" stroke="#00c8c8" class="cl"/>
<path d="M255.47 307.84 L255.47 307.52 L255.75 306.88 L256.04 306.55 L256.62 306.23 L257.78 306.23 L258.35 306.55 L258.64 306.88 L258.93 307.52 L258.93 308.16 L258.64 308.80 L258.07 309.77 L255.18 312.98 L259.22 312.98 M264.71 307.20 L264.42 306.55 L263.55 306.23 L262.98 306.23 L262.11 306.55 L261.53 307.52 L261.24 309.12 L261.24 310.73 L261.53 312.01 L262.11 312.66 L262.98 312.98 L263.26 312.98 L264.13 312.66 L264.71 312.01 L265.00 311.05 L265.00 310.73 L264.71 309.77 L264.13 309.12 L263.26 308.80 L262.98 308.80 L262.11 309.12 L261.53 309.77 L261.24 310.73 M270.20 306.23 L267.31 306.23 L267.02 309.12 L267.31 308.80 L268.17 308.48 L269.04 308.48 L269.91 308.80 L270.49 309.44 L270.77 310.41 L270.77 311.05 L270.49 312.01 L269.91 312.66 L269.04 312.98 L268.17 312.98 L267.31 312.66 L267.02 312.33 L266.73 311.69" stroke="#00c8c8" class="cl"/>
<path d="M401.11 320.10 L401.11 319.78 L401.40 319.14 L401.68 318.82 L402.26 318.49 L403.42 318.49 L403.99 318.82 L404.28 319.14 L404.57 319.78 L404.57 320.42 L404.28 321.06 L403.71 322.03 L400.82 325.24 L404.86 325.24 M410.35 319.46 L410.06 318.82 L409.19 318.49 L408.62 318.49 L407.75 318.82 L407.17 319.78 L406.88 321.38 L406.88 322.99 L407.17 324.28 L407.75 324.92 L408.62 325.24 L408.90 325.24 L409.77 324.92 L410.35 324.28 L410.64 323.31 L410.64 322.99 L410.35 322.03 L409.77 321.38 L408.90 321.06 L408.62 321.06 L407.75 321.38 L407.17 322.03 L406.88 322.99 M415.84 318.49 L412.95 318.49 L412.66 321.38 L412.95 321.06 L413.81 320.74 L414.68 320.74 L415.55 321.06 L416.13 321.71 L416.41 322.67 L416.41 323.31 L416.13 324.28 L415.55 324.92 L414.68 325.24 L413.81 325.24 L412.95 324.92 L412.66 324.60 L412.37 323.95" stroke="#00c8c8" class="cl"/>
<path d="M471.13 254.50 L471.13 254.17 L471.42 253.51 L471.71 253.17 L472.29 252.84 L473.44 252.84 L474.02 253.17 L474.31 253.51 L474.60 254.17 L474.60 254.84 L474.31 255.50 L473.73 256.50 L470.84 259.83 L474.89 259.83 M480.66 252.84 L477.78 259.83 M476.62 252.84 L480.66 252.84 M484.13 252.84 L483.26 253.17 L482.69 254.17 L482.40 255.84 L482.40 256.83 L482.69 258.50 L483.26 259.50 L484.13 259.83 L484.71 259.83 L485.57 259.50 L486.15 258.50 L486.44 256.83 L486.44 255.84 L486.15 254.17 L485.57 253.17 L484.71 252.84 L484.13 252.84" stroke="#00dc00" class="cl"/>
<path d="M479.30 273.17 L479.30 272.84 L479.60 272.17 L479.90 271.84 L480.50 271.51 L481.71 271.51 L482.31 271.84 L482.61 272.17 L482.91 272.84 L482.91 273.50 L482.61 274.17 L482.01 275.17 L479.00 278.49 L483.21 278.49 M488.93 272.50 L488.63 271.84 L487.72 271.51 L487.12 271.51 L486.22 271.84 L485.62 272.84 L485.32 274.50 L485.32 276.16 L485.62 277.50 L486.22 278.16 L487.12 278.49 L487.42 278.49 L488.33 278.16 L488.93 277.50 L489.23 276.50 L489.23 276.16 L488.93 275.17 L488.33 274.50 L487.42 274.17 L487.12 274.17 L486.22 274.50 L485.62 275.17 L485.32 276.16 M494.64 271.51 L491.63 271.51 L491.33 274.50 L491.63 274.17 L492.54 273.84 L493.44 273.84 L494.34 274.17 L494.94 274.83 L495.25 275.83 L495.25 276.50 L494.94 277.50 L494.34 278.16 L493.44 278.49 L492.54 278.49 L491.63 278.16 L491.33 277.83 L491.03 277.16" stroke="#00c8c8" class="cl"/>
<path d="M558.62 311.93 L558.62 311.60 L558.92 310.96 L559.22 310.64 L559.82 310.32 L561.03 310.32 L561.63 310.64 L561.93 310.96 L562.23 311.60 L562.23 312.25 L561.93 312.89 L561.33 313.85 L558.32 317.06 L562.53 317.06 M568.25 311.28 L567.95 310.64 L567.04 310.32 L566.44 310.32 L565.54 310.64 L564.94 311.60 L564.64 313.21 L564.64 314.82 L564.94 316.10 L565.54 316.74 L566.44 317.06 L566.74 317.06 L567.64 316.74 L568.25 316.10 L568.55 315.14 L568.55 314.82 L568.25 313.85 L567.64 313.21 L566.74 312.89 L566.44 312.89 L565.54 313.21 L564.94 313.85 L564.64 314.82 M573.96 310.32 L570.95 310.32 L570.65 313.21 L570.95 312.89 L571.86 312.57 L572.76 312.57 L573.66 312.89 L574.26 313.53 L574.56 314.49 L574.56 315.14 L574.26 316.10 L573.66 316.74 L572.76 317.06 L571.86 317.06 L570.95 316.74 L570.65 316.42 L570.35 315.78" stroke="#00c8c8" class="cl"/>
<path d="M267.72 345.14 L267.72 344.82 L268.02 344.18 L268.32 343.86 L268.92 343.54 L270.13 343.54 L270.73 343.86 L271.03 344.18 L271.33 344.82 L271.33 345.46 L271.03 346.10 L270.43 347.07 L267.42 350.28 L271.63 350.28 M277.35 344.50 L277.05 343.86 L276.14 343.54 L275.54 343.54 L274.64 343.86 L274.04 344.82 L273.74 346.43 L273.74 348.03 L274.04 349.32 L274.64 349.96 L275.54 350.28 L275.84 350.28 L276.75 349.96 L277.35 349.32 L277.65 348.35 L277.65 348.03 L277.35 347.07 L276.75 346.43 L275.84 346.10 L275.54 346.10 L274.64 346.43 L274.04 347.07 L273.74 348.03 M283.06 343.54 L280.05 343.54 L279.75 346.43 L280.05 346.10 L280.96 345.78 L281.86 345.78 L282.76 346.10 L283.36 346.75 L283.66 347.71 L283.66 348.35 L283.36 349.32 L282.76 349.96 L281.86 350.28 L280.96 350.28 L280.05 349.96 L279.75 349.64 L279.45 348.99" stroke="#00c8c8" class="cl"/>
<path d="M304.50 378.52 L304.50 378.20 L304.81 377.56 L305.12 377.24 L305.75 376.91 L307.00 376.91 L307.62 377.24 L307.94 377.56 L308.25 378.20 L308.25 378.84 L307.94 379.48 L307.31 380.45 L304.18 383.66 L308.56 383.66 M314.51 377.88 L314.20 377.24 L313.26 376.91 L312.63 376.91 L311.69 377.24 L311.07 378.20 L310.75 379.80 L310.75 381.41 L311.07 382.69 L311.69 383.34 L312.63 383.66 L312.94 383.66 L313.88 383.34 L314.51 382.69 L314.82 381.73 L314.82 381.41 L314.51 380.45 L313.88 379.80 L312.94 379.48 L312.63 379.48 L311.69 379.80 L311.07 380.45 L310.75 381.41 M320.45 376.91 L317.32 376.91 L317.01 379.80 L317.32 379.48 L318.26 379.16 L319.20 379.16 L320.14 379.48 L320.77 380.13 L321.08 381.09 L321.08 381.73 L320.77 382.69 L320.14 383.34 L319.20 383.66 L318.26 383.66 L317.32 383.34 L317.01 383.02 L316.70 382.37" stroke="#00c8c8" class="cl"/>
<path d="M334.10 338.33 L334.10 338.01 L334.39 337.37 L334.68 337.04 L335.26 336.72 L336.41 336.72 L336.99 337.04 L337.28 337.37 L337.57 338.01 L337.57 338.65 L337.28 339.29 L336.70 340.26 L333.81 343.47 L337.86 343.47 M343.63 336.72 L340.75 343.47 M339.59 336.72 L343.63 336.72 M347.10 336.72 L346.23 337.04 L345.66 338.01 L345.37 339.61 L345.37 340.58 L345.66 342.18 L346.23 343.15 L347.10 343.47 L347.68 343.47 L348.54 343.15 L349.12 342.18 L349.41 340.58 L349.41 339.61 L349.12 338.01 L348.54 337.04 L347.68 336.72 L347.10 336.72" stroke="#00dc00" class="cl"/>
<path d="M446.36 384.04 L446.36 383.71 L446.66 383.04 L446.96 382.71 L447.56 382.38 L448.76 382.38 L449.37 382.71 L449.67 383.04 L449.97 383.71 L449.97 384.37 L449.67 385.04 L449.06 386.04 L446.06 389.37 L450.27 389.37 M456.29 382.38 L453.28 389.37 M452.07 382.38 L456.29 382.38 M459.90 382.38 L458.99 382.71 L458.39 383.71 L458.09 385.37 L458.09 386.37 L458.39 388.04 L458.99 389.03 L459.90 389.37 L460.50 389.37 L461.40 389.03 L462.00 388.04 L462.30 386.37 L462.30 385.37 L462.00 383.71 L461.40 382.71 L460.50 382.38 L459.90 382.38" stroke="#00dc00" class="cl"/>
<path d="M466.79 384.04 L466.79 383.71 L467.09 383.04 L467.39 382.71 L468.00 382.38 L469.20 382.38 L469.80 382.71 L470.10 383.04 L470.40 383.71 L470.40 384.37 L470.10 385.04 L469.50 386.04 L466.49 389.37 L470.70 389.37 M476.42 383.38 L476.12 382.71 L475.22 382.38 L474.62 382.38 L473.71 382.71 L473.11 383.71 L472.81 385.37 L472.81 387.04 L473.11 388.37 L473.71 389.03 L474.62 389.37 L474.92 389.37 L475.82 389.03 L476.42 388.37 L476.72 387.37 L476.72 387.04 L476.42 386.04 L475.82 385.37 L474.92 385.04 L474.62 385.04 L473.71 385.37 L473.11 386.04 L472.81 387.04 M482.14 382.38 L479.13 382.38 L478.83 385.37 L479.13 385.04 L480.03 384.71 L480.93 384.71 L481.84 385.04 L482.44 385.71 L482.74 386.70 L482.74 387.37 L482.44 388.37 L481.84 389.03 L480.93 389.37 L480.03 389.37 L479.13 389.03 L478.83 388.70 L478.53 388.04" stroke="#00c8c8" class="cl"/>
<path d="M616.82 360.36 L616.82 360.03 L617.12 359.36 L617.42 359.03 L618.02 358.70 L619.23 358.70 L619.83 359.03 L620.13 359.36 L620.43 360.03 L620.43 360.70 L620.13 361.36 L619.53 362.36 L616.52 365.69 L620.73 365.69 M626.75 358.70 L623.74 365.69 M622.54 358.70 L626.75 358.70 M630.36 358.70 L629.46 359.03 L628.85 360.03 L628.55 361.69 L628.55 362.69 L628.85 364.36 L629.46 365.36 L630.36 365.69 L630.96 365.69 L631.86 365.36 L632.46 364.36 L632.77 362.69 L632.77 361.69 L632.46 360.03 L631.86 359.03 L630.96 358.70 L630.36 358.70" stroke="#00dc00" class="cl"/>
<path d="M412.73 412.06 L412.73 411.72 L413.03 411.05 L413.33 410.71 L413.94 410.37 L415.14 410.37 L415.74 410.71 L416.04 411.05 L416.34 411.72 L416.34 412.40 L416.04 413.08 L415.44 414.09 L412.43 417.48 L416.64 417.48 M422.66 410.37 L419.65 417.48 M418.45 410.37 L422.66 410.37 M426.27 410.37 L425.37 410.71 L424.77 411.72 L424.47 413.42 L424.47 414.43 L424.77 416.12 L425.37 417.14 L426.27 417.48 L426.87 417.48 L427.78 417.14 L428.38 416.12 L428.68 414.43 L428.68 413.42 L428.38 411.72 L427.78 410.71 L426.87 410.37 L426.27 410.37" stroke="#00dc00" class="cl"/>
<path d="M401.17 428.30 L401.17 427.98 L401.45 427.34 L401.72 427.02 L402.28 426.70 L403.38 426.70 L403.94 427.02 L404.21 427.34 L404.49 427.98 L404.49 428.62 L404.21 429.27 L403.66 430.23 L400.89 433.44 L404.77 433.44 M410.30 426.70 L407.54 433.44 M406.43 426.70 L410.30 426.70 M413.62 426.70 L412.79 427.02 L412.24 427.98 L411.96 429.59 L411.96 430.55 L412.24 432.16 L412.79 433.12 L413.62 433.44 L414.18 433.44 L415.01 433.12 L415.56 432.16 L415.84 430.55 L415.84 429.59 L415.56 427.98 L415.01 427.02 L414.18 426.70 L413.62 426.70" stroke="#00dc00" class="cl"/>
<path d="M562.21 403.28 L562.21 402.93 L562.52 402.23 L562.83 401.88 L563.45 401.53 L564.69 401.53 L565.31 401.88 L565.62 402.23 L565.93 402.93 L565.93 403.63 L565.62 404.33 L565.00 405.38 L561.90 408.88 L566.24 408.88 M572.45 401.53 L569.35 408.88 M568.11 401.53 L572.45 401.53 M576.18 401.53 L575.25 401.88 L574.63 402.93 L574.32 404.68 L574.32 405.73 L574.63 407.48 L575.25 408.53 L576.18 408.88 L576.80 408.88 L577.73 408.53 L578.35 407.48 L578.66 405.73 L578.66 404.68 L578.35 402.93 L577.73 401.88 L576.80 401.53 L576.18 401.53" stroke="#00dc00" class="cl"/>
<path d="M558.13 422.53 L558.13 422.15 L558.43 421.39 L558.73 421.01 L559.33 420.63 L560.53 420.63 L561.14 421.01 L561.44 421.39 L561.74 422.15 L561.74 422.91 L561.44 423.67 L560.84 424.81 L557.83 428.60 L562.04 428.60 M568.06 420.63 L565.05 428.60 M563.84 420.63 L568.06 420.63 M573.47 420.63 L570.46 420.63 L570.16 424.05 L570.46 423.67 L571.37 423.29 L572.27 423.29 L573.17 423.67 L573.77 424.43 L574.07 425.57 L574.07 426.33 L573.77 427.46 L573.17 428.22 L572.27 428.60 L571.37 428.60 L570.46 428.22 L570.16 427.84 L569.86 427.09" stroke="#e6dc32" class="cl"/>
<rect x="34" y="147.8" width="666.8" height="337.8" fill="none" stroke="#fff" stroke-width="2.2"/>
<line x1="32" y1="147.4" x2="34" y2="147.4" stroke="#ddd" stroke-width="1"/>
<path d="M14.05 143.70 L11.00 148.97 L15.58 148.97 M14.05 143.70 L14.05 151.60 M17.41 145.58 L17.41 145.20 L17.71 144.45 L18.02 144.08 L18.63 143.70 L19.85 143.70 L20.46 144.08 L20.76 144.45 L21.07 145.20 L21.07 145.96 L20.76 146.71 L20.15 147.84 L17.10 151.60 L21.37 151.60 M23.51 143.70 L23.51 151.60 M23.51 143.70 L27.78 151.60 M27.78 143.70 L27.78 151.60" class="ax"/>
<line x1="32" y1="187.4" x2="34" y2="187.4" stroke="#ddd" stroke-width="1"/>
<path d="M14.05 183.70 L11.00 188.97 L15.58 188.97 M14.05 183.70 L14.05 191.60 M18.93 183.70 L18.02 184.08 L17.41 185.20 L17.10 187.09 L17.10 188.21 L17.41 190.10 L18.02 191.22 L18.93 191.60 L19.54 191.60 L20.46 191.22 L21.07 190.10 L21.37 188.21 L21.37 187.09 L21.07 185.20 L20.46 184.08 L19.54 183.70 L18.93 183.70 M23.51 183.70 L23.51 191.60 M23.51 183.70 L27.78 191.60 M27.78 183.70 L27.78 191.60" class="ax"/>
<line x1="32" y1="227.4" x2="34" y2="227.4" stroke="#ddd" stroke-width="1"/>
<path d="M11.62 223.70 L14.97 223.70 L13.14 226.71 L14.05 226.71 L14.66 227.09 L14.97 227.46 L15.27 228.59 L15.27 229.34 L14.97 230.47 L14.36 231.22 L13.45 231.60 L12.53 231.60 L11.62 231.22 L11.31 230.85 L11.00 230.10 M18.63 223.70 L17.71 224.08 L17.41 224.83 L17.41 225.58 L17.71 226.33 L18.32 226.71 L19.54 227.09 L20.46 227.46 L21.07 228.21 L21.37 228.97 L21.37 230.10 L21.07 230.85 L20.76 231.22 L19.85 231.60 L18.63 231.60 L17.71 231.22 L17.41 230.85 L17.10 230.10 L17.10 228.97 L17.41 228.21 L18.02 227.46 L18.93 227.09 L20.15 226.71 L20.76 226.33 L21.07 225.58 L21.07 224.83 L20.76 224.08 L19.85 223.70 L18.63 223.70 M23.51 223.70 L23.51 231.60 M23.51 223.70 L27.78 231.60 M27.78 223.70 L27.78 231.60" class="ax"/>
<line x1="32" y1="267.4" x2="34" y2="267.4" stroke="#ddd" stroke-width="1"/>
<path d="M11.62 263.70 L14.97 263.70 L13.14 266.71 L14.05 266.71 L14.66 267.09 L14.97 267.46 L15.27 268.59 L15.27 269.34 L14.97 270.47 L14.36 271.22 L13.45 271.60 L12.53 271.60 L11.62 271.22 L11.31 270.85 L11.00 270.10 M21.07 264.83 L20.76 264.08 L19.85 263.70 L19.24 263.70 L18.32 264.08 L17.71 265.20 L17.41 267.09 L17.41 268.97 L17.71 270.47 L18.32 271.22 L19.24 271.60 L19.54 271.60 L20.46 271.22 L21.07 270.47 L21.37 269.34 L21.37 268.97 L21.07 267.84 L20.46 267.09 L19.54 266.71 L19.24 266.71 L18.32 267.09 L17.71 267.84 L17.41 268.97 M23.51 263.70 L23.51 271.60 M23.51 263.70 L27.78 271.60 M27.78 263.70 L27.78 271.60" class="ax"/>
<line x1="32" y1="307.4" x2="34" y2="307.4" stroke="#ddd" stroke-width="1"/>
<path d="M11.62 303.70 L14.97 303.70 L13.14 306.71 L14.05 306.71 L14.66 307.09 L14.97 307.46 L15.27 308.59 L15.27 309.34 L14.97 310.47 L14.36 311.22 L13.45 311.60 L12.53 311.60 L11.62 311.22 L11.31 310.85 L11.00 310.10 M20.15 303.70 L17.10 308.97 L21.68 308.97 M20.15 303.70 L20.15 311.60 M23.51 303.70 L23.51 311.60 M23.51 303.70 L27.78 311.60 M27.78 303.70 L27.78 311.60" class="ax"/>
<line x1="32" y1="347.4" x2="34" y2="347.4" stroke="#ddd" stroke-width="1"/>
<path d="M11.62 343.70 L14.97 343.70 L13.14 346.71 L14.05 346.71 L14.66 347.09 L14.97 347.46 L15.27 348.59 L15.27 349.34 L14.97 350.47 L14.36 351.22 L13.45 351.60 L12.53 351.60 L11.62 351.22 L11.31 350.85 L11.00 350.10 M17.41 345.58 L17.41 345.20 L17.71 344.45 L18.02 344.08 L18.63 343.70 L19.85 343.70 L20.46 344.08 L20.76 344.45 L21.07 345.20 L21.07 345.96 L20.76 346.71 L20.15 347.84 L17.10 351.60 L21.37 351.60 M23.51 343.70 L23.51 351.60 M23.51 343.70 L27.78 351.60 M27.78 343.70 L27.78 351.60" class="ax"/>
<line x1="32" y1="387.4" x2="34" y2="387.4" stroke="#ddd" stroke-width="1"/>
<path d="M11.62 383.70 L14.97 383.70 L13.14 386.71 L14.05 386.71 L14.66 387.09 L14.97 387.46 L15.27 388.59 L15.27 389.34 L14.97 390.47 L14.36 391.22 L13.45 391.60 L12.53 391.60 L11.62 391.22 L11.31 390.85 L11.00 390.10 M18.93 383.70 L18.02 384.08 L17.41 385.20 L17.10 387.09 L17.10 388.21 L17.41 390.10 L18.02 391.22 L18.93 391.60 L19.54 391.60 L20.46 391.22 L21.07 390.10 L21.37 388.21 L21.37 387.09 L21.07 385.20 L20.46 384.08 L19.54 383.70 L18.93 383.70 M23.51 383.70 L23.51 391.60 M23.51 383.70 L27.78 391.60 M27.78 383.70 L27.78 391.60" class="ax"/>
<line x1="32" y1="427.4" x2="34" y2="427.4" stroke="#ddd" stroke-width="1"/>
<path d="M11.31 425.58 L11.31 425.20 L11.62 424.45 L11.92 424.08 L12.53 423.70 L13.75 423.70 L14.36 424.08 L14.66 424.45 L14.97 425.20 L14.97 425.96 L14.66 426.71 L14.05 427.84 L11.00 431.60 L15.27 431.60 M18.63 423.70 L17.71 424.08 L17.41 424.83 L17.41 425.58 L17.71 426.33 L18.32 426.71 L19.54 427.09 L20.46 427.46 L21.07 428.21 L21.37 428.97 L21.37 430.10 L21.07 430.85 L20.76 431.22 L19.85 431.60 L18.63 431.60 L17.71 431.22 L17.41 430.85 L17.10 430.10 L17.10 428.97 L17.41 428.21 L18.02 427.46 L18.93 427.09 L20.15 426.71 L20.76 426.33 L21.07 425.58 L21.07 424.83 L20.76 424.08 L19.85 423.70 L18.63 423.70 M23.51 423.70 L23.51 431.60 M23.51 423.70 L27.78 431.60 M27.78 423.70 L27.78 431.60" class="ax"/>
<line x1="32" y1="467.4" x2="34" y2="467.4" stroke="#ddd" stroke-width="1"/>
<path d="M11.31 465.58 L11.31 465.20 L11.62 464.45 L11.92 464.08 L12.53 463.70 L13.75 463.70 L14.36 464.08 L14.66 464.45 L14.97 465.20 L14.97 465.96 L14.66 466.71 L14.05 467.84 L11.00 471.60 L15.27 471.60 M21.07 464.83 L20.76 464.08 L19.85 463.70 L19.24 463.70 L18.32 464.08 L17.71 465.20 L17.41 467.09 L17.41 468.97 L17.71 470.47 L18.32 471.22 L19.24 471.60 L19.54 471.60 L20.46 471.22 L21.07 470.47 L21.37 469.34 L21.37 468.97 L21.07 467.84 L20.46 467.09 L19.54 466.71 L19.24 466.71 L18.32 467.09 L17.71 467.84 L17.41 468.97 M23.51 463.70 L23.51 471.60 M23.51 463.70 L27.78 471.60 M27.78 463.70 L27.78 471.60" class="ax"/>
<line x1="100.9" y1="486" x2="100.9" y2="489" stroke="#ddd" stroke-width="1"/>
<path d="M97.09 491.70 L94.04 499.60 M92.82 491.70 L97.09 491.70 M100.75 491.70 L99.83 492.08 L99.22 493.20 L98.92 495.09 L98.92 496.21 L99.22 498.10 L99.83 499.22 L100.75 499.60 L101.36 499.60 L102.27 499.22 L102.88 498.10 L103.19 496.21 L103.19 495.09 L102.88 493.20 L102.27 492.08 L101.36 491.70 L100.75 491.70 M105.32 491.70 L105.32 499.60 M105.32 491.70 L109.29 491.70 M105.32 495.46 L107.76 495.46 M105.32 499.60 L109.29 499.60" class="ax"/>
<line x1="183.7" y1="486" x2="183.7" y2="489" stroke="#ddd" stroke-width="1"/>
<path d="M179.89 491.70 L176.84 499.60 M175.62 491.70 L179.89 491.70 M185.38 491.70 L182.33 491.70 L182.02 495.09 L182.33 494.71 L183.24 494.33 L184.16 494.33 L185.07 494.71 L185.68 495.46 L185.99 496.59 L185.99 497.34 L185.68 498.47 L185.07 499.22 L184.16 499.60 L183.24 499.60 L182.33 499.22 L182.02 498.85 L181.72 498.10 M188.12 491.70 L188.12 499.60 M188.12 491.70 L192.09 491.70 M188.12 495.46 L190.56 495.46 M188.12 499.60 L192.09 499.60" class="ax"/>
<line x1="267.5" y1="486" x2="267.5" y2="489" stroke="#ddd" stroke-width="1"/>
<path d="M260.94 491.70 L260.03 492.08 L259.72 492.83 L259.72 493.58 L260.03 494.33 L260.64 494.71 L261.86 495.09 L262.77 495.46 L263.38 496.21 L263.69 496.97 L263.69 498.10 L263.38 498.85 L263.08 499.22 L262.16 499.60 L260.94 499.60 L260.03 499.22 L259.72 498.85 L259.42 498.10 L259.42 496.97 L259.72 496.21 L260.33 495.46 L261.25 495.09 L262.47 494.71 L263.08 494.33 L263.38 493.58 L263.38 492.83 L263.08 492.08 L262.16 491.70 L260.94 491.70 M267.35 491.70 L266.43 492.08 L265.82 493.20 L265.52 495.09 L265.52 496.21 L265.82 498.10 L266.43 499.22 L267.35 499.60 L267.96 499.60 L268.87 499.22 L269.48 498.10 L269.79 496.21 L269.79 495.09 L269.48 493.20 L268.87 492.08 L267.96 491.70 L267.35 491.70 M271.92 491.70 L271.92 499.60 M271.92 491.70 L275.89 491.70 M271.92 495.46 L274.36 495.46 M271.92 499.60 L275.89 499.60" class="ax"/>
<line x1="350.7" y1="486" x2="350.7" y2="489" stroke="#ddd" stroke-width="1"/>
<path d="M344.14 491.70 L343.23 492.08 L342.92 492.83 L342.92 493.58 L343.23 494.33 L343.84 494.71 L345.06 495.09 L345.97 495.46 L346.58 496.21 L346.89 496.97 L346.89 498.10 L346.58 498.85 L346.28 499.22 L345.36 499.60 L344.14 499.60 L343.23 499.22 L342.92 498.85 L342.62 498.10 L342.62 496.97 L342.92 496.21 L343.53 495.46 L344.45 495.09 L345.67 494.71 L346.28 494.33 L346.58 493.58 L346.58 492.83 L346.28 492.08 L345.36 491.70 L344.14 491.70 M352.38 491.70 L349.33 491.70 L349.02 495.09 L349.33 494.71 L350.24 494.33 L351.16 494.33 L352.07 494.71 L352.68 495.46 L352.99 496.59 L352.99 497.34 L352.68 498.47 L352.07 499.22 L351.16 499.60 L350.24 499.60 L349.33 499.22 L349.02 498.85 L348.72 498.10 M355.12 491.70 L355.12 499.60 M355.12 491.70 L359.09 491.70 M355.12 495.46 L357.56 495.46 M355.12 499.60 L359.09 499.60" class="ax"/>
<line x1="434.0" y1="486" x2="434.0" y2="489" stroke="#ddd" stroke-width="1"/>
<path d="M429.88 494.33 L429.58 495.46 L428.97 496.21 L428.05 496.59 L427.75 496.59 L426.83 496.21 L426.22 495.46 L425.92 494.33 L425.92 493.96 L426.22 492.83 L426.83 492.08 L427.75 491.70 L428.05 491.70 L428.97 492.08 L429.58 492.83 L429.88 494.33 L429.88 496.21 L429.58 498.10 L428.97 499.22 L428.05 499.60 L427.44 499.60 L426.53 499.22 L426.22 498.47 M433.85 491.70 L432.93 492.08 L432.32 493.20 L432.02 495.09 L432.02 496.21 L432.32 498.10 L432.93 499.22 L433.85 499.60 L434.46 499.60 L435.37 499.22 L435.98 498.10 L436.29 496.21 L436.29 495.09 L435.98 493.20 L435.37 492.08 L434.46 491.70 L433.85 491.70 M438.42 491.70 L438.42 499.60 M438.42 491.70 L442.39 491.70 M438.42 495.46 L440.86 495.46 M438.42 499.60 L442.39 499.60" class="ax"/>
<line x1="517.2" y1="486" x2="517.2" y2="489" stroke="#ddd" stroke-width="1"/>
<path d="M513.08 494.33 L512.78 495.46 L512.17 496.21 L511.25 496.59 L510.95 496.59 L510.03 496.21 L509.42 495.46 L509.12 494.33 L509.12 493.96 L509.42 492.83 L510.03 492.08 L510.95 491.70 L511.25 491.70 L512.17 492.08 L512.78 492.83 L513.08 494.33 L513.08 496.21 L512.78 498.10 L512.17 499.22 L511.25 499.60 L510.64 499.60 L509.73 499.22 L509.42 498.47 M518.88 491.70 L515.83 491.70 L515.52 495.09 L515.83 494.71 L516.74 494.33 L517.66 494.33 L518.57 494.71 L519.18 495.46 L519.49 496.59 L519.49 497.34 L519.18 498.47 L518.57 499.22 L517.66 499.60 L516.74 499.60 L515.83 499.22 L515.52 498.85 L515.22 498.10 M521.62 491.70 L521.62 499.60 M521.62 491.70 L525.59 491.70 M521.62 495.46 L524.06 495.46 M521.62 499.60 L525.59 499.60" class="ax"/>
<line x1="600.1" y1="486" x2="600.1" y2="489" stroke="#ddd" stroke-width="1"/>
<path d="M589.88 493.20 L590.49 492.83 L591.41 491.70 L591.41 499.60 M596.90 491.70 L595.98 492.08 L595.37 493.20 L595.07 495.09 L595.07 496.21 L595.37 498.10 L595.98 499.22 L596.90 499.60 L597.51 499.60 L598.42 499.22 L599.03 498.10 L599.34 496.21 L599.34 495.09 L599.03 493.20 L598.42 492.08 L597.51 491.70 L596.90 491.70 M603.00 491.70 L602.08 492.08 L601.47 493.20 L601.17 495.09 L601.17 496.21 L601.47 498.10 L602.08 499.22 L603.00 499.60 L603.61 499.60 L604.52 499.22 L605.13 498.10 L605.44 496.21 L605.44 495.09 L605.13 493.20 L604.52 492.08 L603.61 491.70 L603.00 491.70 M607.57 491.70 L607.57 499.60 M607.57 491.70 L611.54 491.70 M607.57 495.46 L610.01 495.46 M607.57 499.60 L611.54 499.60" class="ax"/>
<line x1="683.4" y1="486" x2="683.4" y2="489" stroke="#ddd" stroke-width="1"/>
<path d="M673.18 493.20 L673.79 492.83 L674.71 491.70 L674.71 499.60 M680.20 491.70 L679.28 492.08 L678.67 493.20 L678.37 495.09 L678.37 496.21 L678.67 498.10 L679.28 499.22 L680.20 499.60 L680.81 499.60 L681.72 499.22 L682.33 498.10 L682.64 496.21 L682.64 495.09 L682.33 493.20 L681.72 492.08 L680.81 491.70 L680.20 491.70 M688.13 491.70 L685.08 491.70 L684.77 495.09 L685.08 494.71 L685.99 494.33 L686.91 494.33 L687.82 494.71 L688.43 495.46 L688.74 496.59 L688.74 497.34 L688.43 498.47 L687.82 499.22 L686.91 499.60 L685.99 499.60 L685.08 499.22 L684.77 498.85 L684.47 498.10 M690.87 491.70 L690.87 499.60 M690.87 491.70 L694.84 491.70 M690.87 495.46 L693.31 495.46 M690.87 499.60 L694.84 499.60" class="ax"/>
<path d="M35 478.8 L40 479.2 L44 480.8 L46.6 483.8" stroke="#aaa" class="ct"/>
</g>
</svg>
</div>
</body></html>
